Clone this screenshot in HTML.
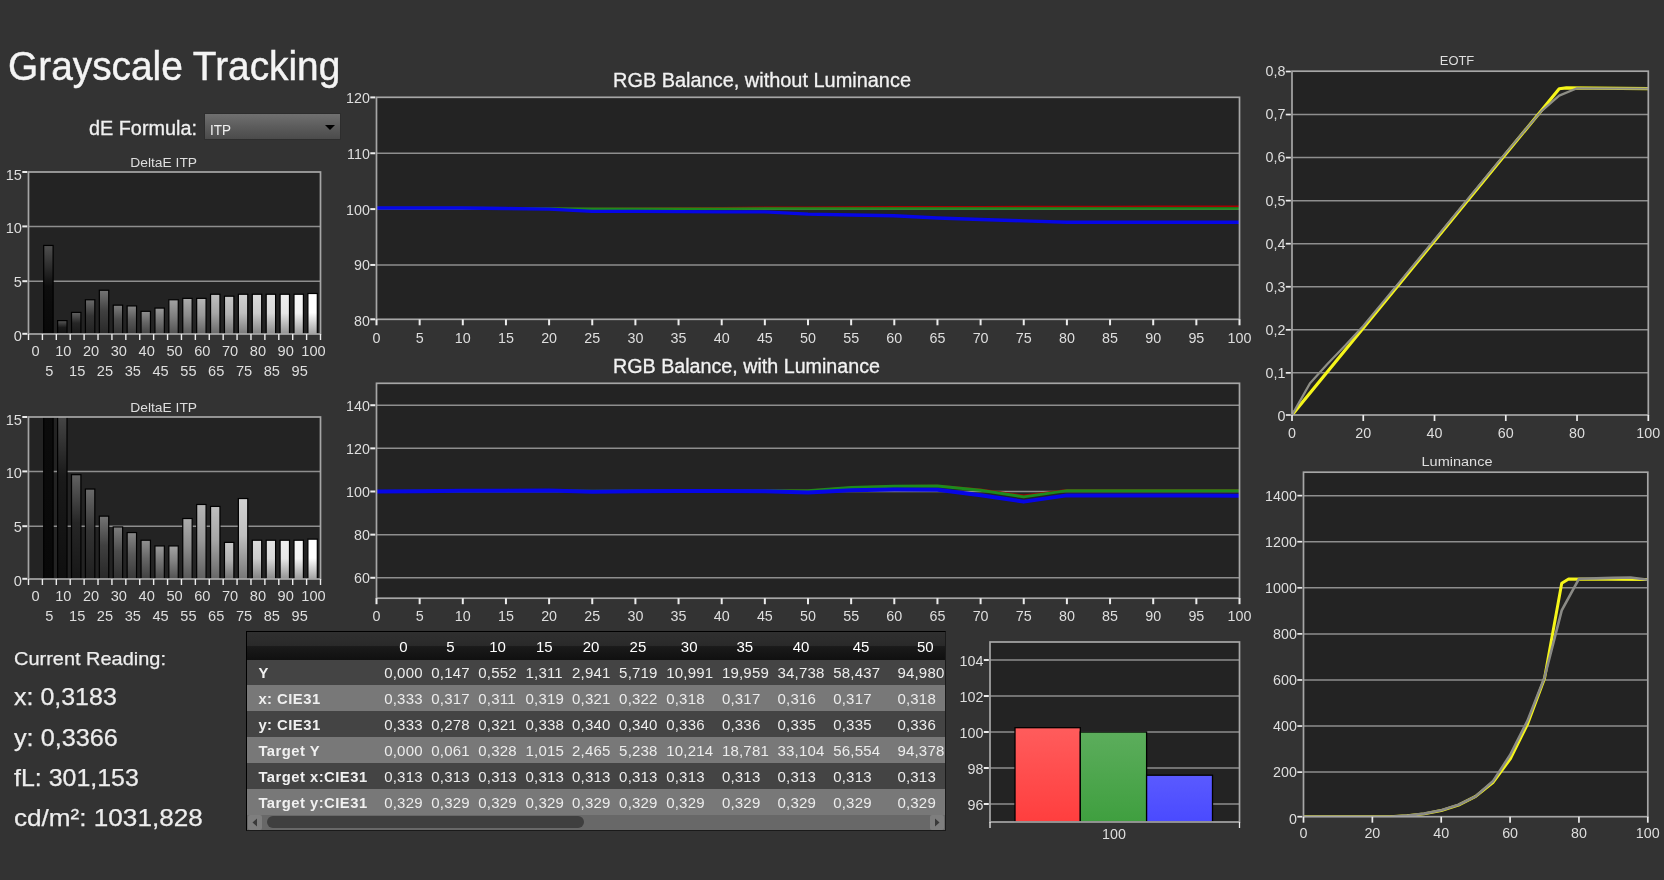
<!DOCTYPE html>
<html lang="en"><head><meta charset="utf-8"><title>Grayscale Tracking</title>
<style>
html,body{margin:0;padding:0}
body{width:1664px;height:880px;background:#333333;position:relative;overflow:hidden;font-family:"Liberation Sans",sans-serif;color:#f0f0f0}
.abs{position:absolute;white-space:nowrap;line-height:1;transform-origin:0 0}
h1.abs{margin:0;font-weight:400;left:7.5px;top:46px;font-size:41px;color:#f4f4f4;transform:scaleX(0.947);-webkit-text-stroke:0.45px #f4f4f4}
.lbl{left:89.2px;top:119.2px;font-size:19.6px;color:#f0f0f0;transform:scaleX(1.012);-webkit-text-stroke:0.3px #f0f0f0}
.dd{position:absolute;left:205px;top:113.9px;width:134.8px;height:25.6px;background:linear-gradient(#707070,#5c5c5c 50%,#4b4b4b);box-shadow:0 0 0 0.8px #2c2c2c}
.dd span{position:absolute;left:5.4px;top:8.3px;font-size:15.5px;line-height:1;color:#f2f2f2;transform:scaleX(0.87);transform-origin:0 0}
.dd i{position:absolute;left:119.8px;top:11.2px;width:0;height:0;border-left:5.2px solid transparent;border-right:5.2px solid transparent;border-top:5.2px solid #000}
.rd{left:14px;color:#ededed;-webkit-text-stroke:0.25px #ededed}
.tbl{position:absolute;left:245.6px;top:631px;width:698.3px;height:198.3px;border:1.5px solid #000;border-right:1px solid #1a1a1a;border-bottom:1px solid #1a1a1a;background:#444;overflow:hidden}
.hdr{position:absolute;left:0;top:0;width:100%;height:27.6px;background:linear-gradient(#2f2f2f 0,#2a2a2a 48%,#1a1a1a 52%,#101010 100%)}
.hc{position:absolute;top:7.4px;width:40px;text-align:center;font-size:15px;line-height:1;color:#fff;}
.row{position:absolute;left:0;width:100%;height:25.9px}
.r0{background:#444}.r1{background:#787878}
.rl{position:absolute;left:11.8px;top:6.9px;font-size:14.8px;letter-spacing:0.48px;font-weight:700;line-height:1;color:#f0f0f0}
.c{position:absolute;top:5.8px;font-size:15px;letter-spacing:0.2px;line-height:1;color:#ececec;white-space:nowrap}
.sb{position:absolute;left:0;top:182.8px;width:100%;height:15.5px;background:#686868}
.sbl,.sbr{position:absolute;top:0;width:14px;height:15px;background:#7e7e7e;border-radius:2px}
.sbl{left:1px}.sbr{right:1px}
.thumb{position:absolute;left:20px;top:1.5px;width:317px;height:12px;border-radius:6px;background:#3f3f3f}
#soft{position:absolute;left:0;top:0;width:1664px;height:880px;filter:blur(0.45px)}
</style></head><body><div id="soft">
<svg width="1664" height="880" viewBox="0 0 1664 880" style="position:absolute;left:0;top:0" font-family="'Liberation Sans', sans-serif">
<defs>
<linearGradient id="g0" x1="0" y1="0" x2="0" y2="1"><stop offset="0" stop-color="rgb(70,70,70)"/><stop offset="0.45" stop-color="rgb(0,0,0)"/><stop offset="1" stop-color="rgb(0,0,0)"/></linearGradient>
<linearGradient id="g1" x1="0" y1="0" x2="0" y2="1"><stop offset="0" stop-color="rgb(79,79,79)"/><stop offset="0.45" stop-color="rgb(13,13,13)"/><stop offset="1" stop-color="rgb(8,8,8)"/></linearGradient>
<linearGradient id="g2" x1="0" y1="0" x2="0" y2="1"><stop offset="0" stop-color="rgb(89,89,89)"/><stop offset="0.45" stop-color="rgb(26,26,26)"/><stop offset="1" stop-color="rgb(15,15,15)"/></linearGradient>
<linearGradient id="g3" x1="0" y1="0" x2="0" y2="1"><stop offset="0" stop-color="rgb(98,98,98)"/><stop offset="0.45" stop-color="rgb(38,38,38)"/><stop offset="1" stop-color="rgb(23,23,23)"/></linearGradient>
<linearGradient id="g4" x1="0" y1="0" x2="0" y2="1"><stop offset="0" stop-color="rgb(107,107,107)"/><stop offset="0.45" stop-color="rgb(51,51,51)"/><stop offset="1" stop-color="rgb(31,31,31)"/></linearGradient>
<linearGradient id="g5" x1="0" y1="0" x2="0" y2="1"><stop offset="0" stop-color="rgb(117,117,117)"/><stop offset="0.45" stop-color="rgb(64,64,64)"/><stop offset="1" stop-color="rgb(38,38,38)"/></linearGradient>
<linearGradient id="g6" x1="0" y1="0" x2="0" y2="1"><stop offset="0" stop-color="rgb(126,126,126)"/><stop offset="0.45" stop-color="rgb(76,76,76)"/><stop offset="1" stop-color="rgb(46,46,46)"/></linearGradient>
<linearGradient id="g7" x1="0" y1="0" x2="0" y2="1"><stop offset="0" stop-color="rgb(135,135,135)"/><stop offset="0.45" stop-color="rgb(89,89,89)"/><stop offset="1" stop-color="rgb(54,54,54)"/></linearGradient>
<linearGradient id="g8" x1="0" y1="0" x2="0" y2="1"><stop offset="0" stop-color="rgb(144,144,144)"/><stop offset="0.45" stop-color="rgb(102,102,102)"/><stop offset="1" stop-color="rgb(61,61,61)"/></linearGradient>
<linearGradient id="g9" x1="0" y1="0" x2="0" y2="1"><stop offset="0" stop-color="rgb(154,154,154)"/><stop offset="0.45" stop-color="rgb(115,115,115)"/><stop offset="1" stop-color="rgb(69,69,69)"/></linearGradient>
<linearGradient id="g10" x1="0" y1="0" x2="0" y2="1"><stop offset="0" stop-color="rgb(163,163,163)"/><stop offset="0.45" stop-color="rgb(128,128,128)"/><stop offset="1" stop-color="rgb(76,76,76)"/></linearGradient>
<linearGradient id="g11" x1="0" y1="0" x2="0" y2="1"><stop offset="0" stop-color="rgb(172,172,172)"/><stop offset="0.45" stop-color="rgb(140,140,140)"/><stop offset="1" stop-color="rgb(84,84,84)"/></linearGradient>
<linearGradient id="g12" x1="0" y1="0" x2="0" y2="1"><stop offset="0" stop-color="rgb(182,182,182)"/><stop offset="0.45" stop-color="rgb(153,153,153)"/><stop offset="1" stop-color="rgb(92,92,92)"/></linearGradient>
<linearGradient id="g13" x1="0" y1="0" x2="0" y2="1"><stop offset="0" stop-color="rgb(191,191,191)"/><stop offset="0.45" stop-color="rgb(166,166,166)"/><stop offset="1" stop-color="rgb(99,99,99)"/></linearGradient>
<linearGradient id="g14" x1="0" y1="0" x2="0" y2="1"><stop offset="0" stop-color="rgb(200,200,200)"/><stop offset="0.45" stop-color="rgb(178,178,178)"/><stop offset="1" stop-color="rgb(107,107,107)"/></linearGradient>
<linearGradient id="g15" x1="0" y1="0" x2="0" y2="1"><stop offset="0" stop-color="rgb(210,210,210)"/><stop offset="0.45" stop-color="rgb(191,191,191)"/><stop offset="1" stop-color="rgb(115,115,115)"/></linearGradient>
<linearGradient id="g16" x1="0" y1="0" x2="0" y2="1"><stop offset="0" stop-color="rgb(219,219,219)"/><stop offset="0.45" stop-color="rgb(204,204,204)"/><stop offset="1" stop-color="rgb(122,122,122)"/></linearGradient>
<linearGradient id="g17" x1="0" y1="0" x2="0" y2="1"><stop offset="0" stop-color="rgb(228,228,228)"/><stop offset="0.45" stop-color="rgb(217,217,217)"/><stop offset="1" stop-color="rgb(130,130,130)"/></linearGradient>
<linearGradient id="g18" x1="0" y1="0" x2="0" y2="1"><stop offset="0" stop-color="rgb(238,238,238)"/><stop offset="0.45" stop-color="rgb(230,230,230)"/><stop offset="1" stop-color="rgb(138,138,138)"/></linearGradient>
<linearGradient id="g19" x1="0" y1="0" x2="0" y2="1"><stop offset="0" stop-color="rgb(247,247,247)"/><stop offset="0.45" stop-color="rgb(242,242,242)"/><stop offset="1" stop-color="rgb(145,145,145)"/></linearGradient>
<linearGradient id="g20" x1="0" y1="0" x2="0" y2="1"><stop offset="0" stop-color="rgb(255,255,255)"/><stop offset="0.45" stop-color="rgb(255,255,255)"/><stop offset="1" stop-color="rgb(153,153,153)"/></linearGradient>
<linearGradient id="gr" x1="0" y1="0" x2="0" y2="1"><stop offset="0" stop-color="#ff5c5c"/><stop offset="1" stop-color="#ff3e3e"/></linearGradient>
<linearGradient id="gg" x1="0" y1="0" x2="0" y2="1"><stop offset="0" stop-color="#5cad5c"/><stop offset="1" stop-color="#3f9f3f"/></linearGradient>
<linearGradient id="gb" x1="0" y1="0" x2="0" y2="1"><stop offset="0" stop-color="#5a5aff"/><stop offset="1" stop-color="#4a4aff"/></linearGradient>
</defs>
<rect x="28.5" y="172" width="292" height="162" fill="#232323"/>
<line x1="28.5" y1="281.2" x2="320.5" y2="281.2" stroke="#8e8e8e" stroke-width="1.5"/>
<line x1="28.5" y1="226.4" x2="320.5" y2="226.4" stroke="#8e8e8e" stroke-width="1.5"/>
<clipPath id="cb172"><rect x="28.5" y="172" width="292" height="162"/></clipPath>
<g clip-path="url(#cb172)">
<rect x="43.7" y="245.44" width="9.4" height="90.56" fill="url(#g1)" stroke="#000" stroke-width="1.2"/>
<rect x="57.61" y="320.61" width="9.4" height="15.39" fill="url(#g2)" stroke="#000" stroke-width="1.2"/>
<rect x="71.51" y="312.4" width="9.4" height="23.6" fill="url(#g3)" stroke="#000" stroke-width="1.2"/>
<rect x="85.42" y="299.76" width="9.4" height="36.24" fill="url(#g4)" stroke="#000" stroke-width="1.2"/>
<rect x="99.32" y="290.26" width="9.4" height="45.74" fill="url(#g5)" stroke="#000" stroke-width="1.2"/>
<rect x="113.23" y="305.16" width="9.4" height="30.84" fill="url(#g6)" stroke="#000" stroke-width="1.2"/>
<rect x="127.13" y="305.92" width="9.4" height="30.08" fill="url(#g7)" stroke="#000" stroke-width="1.2"/>
<rect x="141.04" y="311.32" width="9.4" height="24.68" fill="url(#g8)" stroke="#000" stroke-width="1.2"/>
<rect x="154.94" y="308.08" width="9.4" height="27.92" fill="url(#g9)" stroke="#000" stroke-width="1.2"/>
<rect x="168.85" y="299.76" width="9.4" height="36.24" fill="url(#g10)" stroke="#000" stroke-width="1.2"/>
<rect x="182.75" y="298.36" width="9.4" height="37.64" fill="url(#g11)" stroke="#000" stroke-width="1.2"/>
<rect x="196.66" y="298.36" width="9.4" height="37.64" fill="url(#g12)" stroke="#000" stroke-width="1.2"/>
<rect x="210.56" y="294.26" width="9.4" height="41.74" fill="url(#g13)" stroke="#000" stroke-width="1.2"/>
<rect x="224.47" y="296.2" width="9.4" height="39.8" fill="url(#g14)" stroke="#000" stroke-width="1.2"/>
<rect x="238.37" y="294.26" width="9.4" height="41.74" fill="url(#g15)" stroke="#000" stroke-width="1.2"/>
<rect x="252.28" y="294.26" width="9.4" height="41.74" fill="url(#g16)" stroke="#000" stroke-width="1.2"/>
<rect x="266.18" y="294.26" width="9.4" height="41.74" fill="url(#g17)" stroke="#000" stroke-width="1.2"/>
<rect x="280.09" y="294.26" width="9.4" height="41.74" fill="url(#g18)" stroke="#000" stroke-width="1.2"/>
<rect x="293.99" y="294.26" width="9.4" height="41.74" fill="url(#g19)" stroke="#000" stroke-width="1.2"/>
<rect x="307.9" y="293.5" width="9.4" height="42.5" fill="url(#g20)" stroke="#000" stroke-width="1.2"/>
</g>
<rect x="28.5" y="172" width="292" height="162" fill="none" stroke="#a6a6a6" stroke-width="1.7"/>
<line x1="22.3" y1="333.8" x2="27.3" y2="333.8" stroke="#ececec" stroke-width="2"/>
<text x="21.9" y="341.46" text-anchor="end" font-size="14.6" fill="#dedede">0</text>
<line x1="22.3" y1="281.2" x2="27.3" y2="281.2" stroke="#ececec" stroke-width="2"/>
<text x="21.9" y="286.96" text-anchor="end" font-size="14.6" fill="#dedede">5</text>
<line x1="22.3" y1="226.4" x2="27.3" y2="226.4" stroke="#ececec" stroke-width="2"/>
<text x="21.9" y="232.86" text-anchor="end" font-size="14.6" fill="#dedede">10</text>
<line x1="22.3" y1="172" x2="27.3" y2="172" stroke="#ececec" stroke-width="2"/>
<text x="21.9" y="179.56" text-anchor="end" font-size="14.6" fill="#dedede">15</text>
<line x1="28.5" y1="334" x2="28.5" y2="340" stroke="#ececec" stroke-width="1.4"/>
<line x1="42.4" y1="334" x2="42.4" y2="340" stroke="#ececec" stroke-width="1.4"/>
<line x1="56.31" y1="334" x2="56.31" y2="340" stroke="#ececec" stroke-width="1.4"/>
<line x1="70.21" y1="334" x2="70.21" y2="340" stroke="#ececec" stroke-width="1.4"/>
<line x1="84.12" y1="334" x2="84.12" y2="340" stroke="#ececec" stroke-width="1.4"/>
<line x1="98.02" y1="334" x2="98.02" y2="340" stroke="#ececec" stroke-width="1.4"/>
<line x1="111.93" y1="334" x2="111.93" y2="340" stroke="#ececec" stroke-width="1.4"/>
<line x1="125.83" y1="334" x2="125.83" y2="340" stroke="#ececec" stroke-width="1.4"/>
<line x1="139.74" y1="334" x2="139.74" y2="340" stroke="#ececec" stroke-width="1.4"/>
<line x1="153.64" y1="334" x2="153.64" y2="340" stroke="#ececec" stroke-width="1.4"/>
<line x1="167.55" y1="334" x2="167.55" y2="340" stroke="#ececec" stroke-width="1.4"/>
<line x1="181.45" y1="334" x2="181.45" y2="340" stroke="#ececec" stroke-width="1.4"/>
<line x1="195.36" y1="334" x2="195.36" y2="340" stroke="#ececec" stroke-width="1.4"/>
<line x1="209.26" y1="334" x2="209.26" y2="340" stroke="#ececec" stroke-width="1.4"/>
<line x1="223.17" y1="334" x2="223.17" y2="340" stroke="#ececec" stroke-width="1.4"/>
<line x1="237.07" y1="334" x2="237.07" y2="340" stroke="#ececec" stroke-width="1.4"/>
<line x1="250.98" y1="334" x2="250.98" y2="340" stroke="#ececec" stroke-width="1.4"/>
<line x1="264.88" y1="334" x2="264.88" y2="340" stroke="#ececec" stroke-width="1.4"/>
<line x1="278.79" y1="334" x2="278.79" y2="340" stroke="#ececec" stroke-width="1.4"/>
<line x1="292.69" y1="334" x2="292.69" y2="340" stroke="#ececec" stroke-width="1.4"/>
<line x1="306.6" y1="334" x2="306.6" y2="340" stroke="#ececec" stroke-width="1.4"/>
<line x1="320.5" y1="334" x2="320.5" y2="340" stroke="#ececec" stroke-width="1.4"/>
<text x="35.45" y="355.5" text-anchor="middle" font-size="14.6" fill="#dedede">0</text>
<text x="49.36" y="375.5" text-anchor="middle" font-size="14.6" fill="#dedede">5</text>
<text x="63.26" y="355.5" text-anchor="middle" font-size="14.6" fill="#dedede">10</text>
<text x="77.17" y="375.5" text-anchor="middle" font-size="14.6" fill="#dedede">15</text>
<text x="91.07" y="355.5" text-anchor="middle" font-size="14.6" fill="#dedede">20</text>
<text x="104.98" y="375.5" text-anchor="middle" font-size="14.6" fill="#dedede">25</text>
<text x="118.88" y="355.5" text-anchor="middle" font-size="14.6" fill="#dedede">30</text>
<text x="132.79" y="375.5" text-anchor="middle" font-size="14.6" fill="#dedede">35</text>
<text x="146.69" y="355.5" text-anchor="middle" font-size="14.6" fill="#dedede">40</text>
<text x="160.6" y="375.5" text-anchor="middle" font-size="14.6" fill="#dedede">45</text>
<text x="174.5" y="355.5" text-anchor="middle" font-size="14.6" fill="#dedede">50</text>
<text x="188.4" y="375.5" text-anchor="middle" font-size="14.6" fill="#dedede">55</text>
<text x="202.31" y="355.5" text-anchor="middle" font-size="14.6" fill="#dedede">60</text>
<text x="216.21" y="375.5" text-anchor="middle" font-size="14.6" fill="#dedede">65</text>
<text x="230.12" y="355.5" text-anchor="middle" font-size="14.6" fill="#dedede">70</text>
<text x="244.02" y="375.5" text-anchor="middle" font-size="14.6" fill="#dedede">75</text>
<text x="257.93" y="355.5" text-anchor="middle" font-size="14.6" fill="#dedede">80</text>
<text x="271.83" y="375.5" text-anchor="middle" font-size="14.6" fill="#dedede">85</text>
<text x="285.74" y="355.5" text-anchor="middle" font-size="14.6" fill="#dedede">90</text>
<text x="299.64" y="375.5" text-anchor="middle" font-size="14.6" fill="#dedede">95</text>
<text x="313.55" y="355.5" text-anchor="middle" font-size="14.6" fill="#dedede">100</text>
<text x="163.7" y="166.8" text-anchor="middle" font-size="13.6" fill="#dedede" textLength="66.8" lengthAdjust="spacingAndGlyphs">DeltaE ITP</text>
<rect x="28.5" y="417" width="292" height="162" fill="#232323"/>
<line x1="28.5" y1="526.2" x2="320.5" y2="526.2" stroke="#8e8e8e" stroke-width="1.5"/>
<line x1="28.5" y1="471.4" x2="320.5" y2="471.4" stroke="#8e8e8e" stroke-width="1.5"/>
<clipPath id="cb417"><rect x="28.5" y="417" width="292" height="162"/></clipPath>
<g clip-path="url(#cb417)">
<rect x="43.7" y="147" width="9.4" height="434" fill="url(#g1)" stroke="#000" stroke-width="1.2"/>
<rect x="57.61" y="390" width="9.4" height="191" fill="url(#g2)" stroke="#000" stroke-width="1.2"/>
<rect x="71.51" y="474.67" width="9.4" height="106.33" fill="url(#g3)" stroke="#000" stroke-width="1.2"/>
<rect x="85.42" y="489.04" width="9.4" height="91.96" fill="url(#g4)" stroke="#000" stroke-width="1.2"/>
<rect x="99.32" y="516.14" width="9.4" height="64.86" fill="url(#g5)" stroke="#000" stroke-width="1.2"/>
<rect x="113.23" y="526.94" width="9.4" height="54.06" fill="url(#g6)" stroke="#000" stroke-width="1.2"/>
<rect x="127.13" y="532.56" width="9.4" height="48.44" fill="url(#g7)" stroke="#000" stroke-width="1.2"/>
<rect x="141.04" y="540.23" width="9.4" height="40.77" fill="url(#g8)" stroke="#000" stroke-width="1.2"/>
<rect x="154.94" y="545.95" width="9.4" height="35.05" fill="url(#g9)" stroke="#000" stroke-width="1.2"/>
<rect x="168.85" y="545.95" width="9.4" height="35.05" fill="url(#g10)" stroke="#000" stroke-width="1.2"/>
<rect x="182.75" y="518.52" width="9.4" height="62.48" fill="url(#g11)" stroke="#000" stroke-width="1.2"/>
<rect x="196.66" y="504.48" width="9.4" height="76.52" fill="url(#g12)" stroke="#000" stroke-width="1.2"/>
<rect x="210.56" y="506.42" width="9.4" height="74.58" fill="url(#g13)" stroke="#000" stroke-width="1.2"/>
<rect x="224.47" y="542.39" width="9.4" height="38.61" fill="url(#g14)" stroke="#000" stroke-width="1.2"/>
<rect x="238.37" y="498.54" width="9.4" height="82.46" fill="url(#g15)" stroke="#000" stroke-width="1.2"/>
<rect x="252.28" y="540.23" width="9.4" height="40.77" fill="url(#g16)" stroke="#000" stroke-width="1.2"/>
<rect x="266.18" y="540.23" width="9.4" height="40.77" fill="url(#g17)" stroke="#000" stroke-width="1.2"/>
<rect x="280.09" y="540.23" width="9.4" height="40.77" fill="url(#g18)" stroke="#000" stroke-width="1.2"/>
<rect x="293.99" y="540.23" width="9.4" height="40.77" fill="url(#g19)" stroke="#000" stroke-width="1.2"/>
<rect x="307.9" y="539.15" width="9.4" height="41.85" fill="url(#g20)" stroke="#000" stroke-width="1.2"/>
</g>
<rect x="28.5" y="417" width="292" height="162" fill="none" stroke="#a6a6a6" stroke-width="1.7"/>
<line x1="22.3" y1="578.8" x2="27.3" y2="578.8" stroke="#ececec" stroke-width="2"/>
<text x="21.9" y="586.46" text-anchor="end" font-size="14.6" fill="#dedede">0</text>
<line x1="22.3" y1="526.2" x2="27.3" y2="526.2" stroke="#ececec" stroke-width="2"/>
<text x="21.9" y="531.96" text-anchor="end" font-size="14.6" fill="#dedede">5</text>
<line x1="22.3" y1="471.4" x2="27.3" y2="471.4" stroke="#ececec" stroke-width="2"/>
<text x="21.9" y="477.86" text-anchor="end" font-size="14.6" fill="#dedede">10</text>
<line x1="22.3" y1="417" x2="27.3" y2="417" stroke="#ececec" stroke-width="2"/>
<text x="21.9" y="424.56" text-anchor="end" font-size="14.6" fill="#dedede">15</text>
<line x1="28.5" y1="579" x2="28.5" y2="585" stroke="#ececec" stroke-width="1.4"/>
<line x1="42.4" y1="579" x2="42.4" y2="585" stroke="#ececec" stroke-width="1.4"/>
<line x1="56.31" y1="579" x2="56.31" y2="585" stroke="#ececec" stroke-width="1.4"/>
<line x1="70.21" y1="579" x2="70.21" y2="585" stroke="#ececec" stroke-width="1.4"/>
<line x1="84.12" y1="579" x2="84.12" y2="585" stroke="#ececec" stroke-width="1.4"/>
<line x1="98.02" y1="579" x2="98.02" y2="585" stroke="#ececec" stroke-width="1.4"/>
<line x1="111.93" y1="579" x2="111.93" y2="585" stroke="#ececec" stroke-width="1.4"/>
<line x1="125.83" y1="579" x2="125.83" y2="585" stroke="#ececec" stroke-width="1.4"/>
<line x1="139.74" y1="579" x2="139.74" y2="585" stroke="#ececec" stroke-width="1.4"/>
<line x1="153.64" y1="579" x2="153.64" y2="585" stroke="#ececec" stroke-width="1.4"/>
<line x1="167.55" y1="579" x2="167.55" y2="585" stroke="#ececec" stroke-width="1.4"/>
<line x1="181.45" y1="579" x2="181.45" y2="585" stroke="#ececec" stroke-width="1.4"/>
<line x1="195.36" y1="579" x2="195.36" y2="585" stroke="#ececec" stroke-width="1.4"/>
<line x1="209.26" y1="579" x2="209.26" y2="585" stroke="#ececec" stroke-width="1.4"/>
<line x1="223.17" y1="579" x2="223.17" y2="585" stroke="#ececec" stroke-width="1.4"/>
<line x1="237.07" y1="579" x2="237.07" y2="585" stroke="#ececec" stroke-width="1.4"/>
<line x1="250.98" y1="579" x2="250.98" y2="585" stroke="#ececec" stroke-width="1.4"/>
<line x1="264.88" y1="579" x2="264.88" y2="585" stroke="#ececec" stroke-width="1.4"/>
<line x1="278.79" y1="579" x2="278.79" y2="585" stroke="#ececec" stroke-width="1.4"/>
<line x1="292.69" y1="579" x2="292.69" y2="585" stroke="#ececec" stroke-width="1.4"/>
<line x1="306.6" y1="579" x2="306.6" y2="585" stroke="#ececec" stroke-width="1.4"/>
<line x1="320.5" y1="579" x2="320.5" y2="585" stroke="#ececec" stroke-width="1.4"/>
<text x="35.45" y="600.5" text-anchor="middle" font-size="14.6" fill="#dedede">0</text>
<text x="49.36" y="620.5" text-anchor="middle" font-size="14.6" fill="#dedede">5</text>
<text x="63.26" y="600.5" text-anchor="middle" font-size="14.6" fill="#dedede">10</text>
<text x="77.17" y="620.5" text-anchor="middle" font-size="14.6" fill="#dedede">15</text>
<text x="91.07" y="600.5" text-anchor="middle" font-size="14.6" fill="#dedede">20</text>
<text x="104.98" y="620.5" text-anchor="middle" font-size="14.6" fill="#dedede">25</text>
<text x="118.88" y="600.5" text-anchor="middle" font-size="14.6" fill="#dedede">30</text>
<text x="132.79" y="620.5" text-anchor="middle" font-size="14.6" fill="#dedede">35</text>
<text x="146.69" y="600.5" text-anchor="middle" font-size="14.6" fill="#dedede">40</text>
<text x="160.6" y="620.5" text-anchor="middle" font-size="14.6" fill="#dedede">45</text>
<text x="174.5" y="600.5" text-anchor="middle" font-size="14.6" fill="#dedede">50</text>
<text x="188.4" y="620.5" text-anchor="middle" font-size="14.6" fill="#dedede">55</text>
<text x="202.31" y="600.5" text-anchor="middle" font-size="14.6" fill="#dedede">60</text>
<text x="216.21" y="620.5" text-anchor="middle" font-size="14.6" fill="#dedede">65</text>
<text x="230.12" y="600.5" text-anchor="middle" font-size="14.6" fill="#dedede">70</text>
<text x="244.02" y="620.5" text-anchor="middle" font-size="14.6" fill="#dedede">75</text>
<text x="257.93" y="600.5" text-anchor="middle" font-size="14.6" fill="#dedede">80</text>
<text x="271.83" y="620.5" text-anchor="middle" font-size="14.6" fill="#dedede">85</text>
<text x="285.74" y="600.5" text-anchor="middle" font-size="14.6" fill="#dedede">90</text>
<text x="299.64" y="620.5" text-anchor="middle" font-size="14.6" fill="#dedede">95</text>
<text x="313.55" y="600.5" text-anchor="middle" font-size="14.6" fill="#dedede">100</text>
<text x="163.7" y="411.8" text-anchor="middle" font-size="13.6" fill="#dedede" textLength="66.8" lengthAdjust="spacingAndGlyphs">DeltaE ITP</text>
<rect x="376.5" y="97.3" width="863" height="222" fill="#232323"/>
<line x1="376.5" y1="264.95" x2="1239.5" y2="264.95" stroke="#8e8e8e" stroke-width="1.5"/>
<line x1="376.5" y1="209.1" x2="1239.5" y2="209.1" stroke="#8e8e8e" stroke-width="1.5"/>
<line x1="376.5" y1="153.25" x2="1239.5" y2="153.25" stroke="#8e8e8e" stroke-width="1.5"/>
<clipPath id="c97"><rect x="376.5" y="97.3" width="863" height="222"/></clipPath>
<g clip-path="url(#c97)">
<polyline points="376.5,207.98 419.65,207.98 462.8,207.98 505.95,208.26 549.1,208.54 592.25,208.54 635.4,208.26 678.55,207.98 721.7,207.7 764.85,207.42 808,207.42 851.15,207.15 894.3,206.87 937.45,206.87 980.6,206.87 1023.75,206.59 1066.9,206.59 1110.05,206.59 1153.2,206.31 1196.35,206.31 1239.5,206.31" fill="none" stroke="#a80000" stroke-width="1.6" stroke-linejoin="round"/>
<polyline points="376.5,207.98 419.65,207.98 462.8,207.98 505.95,208.26 549.1,208.54 592.25,208.82 635.4,208.82 678.55,208.82 721.7,208.82 764.85,208.54 808,208.54 851.15,208.54 894.3,208.54 937.45,208.54 980.6,208.54 1023.75,208.54 1066.9,208.54 1110.05,208.54 1153.2,208.54 1196.35,208.54 1239.5,208.54" fill="none" stroke="#1d8a1d" stroke-width="2.6" stroke-linejoin="round"/>
<polyline points="376.5,207.98 419.65,207.98 462.8,207.98 505.95,208.54 549.1,209.1 592.25,211.33 635.4,211.33 678.55,211.61 721.7,211.89 764.85,211.89 808,214.13 851.15,214.96 894.3,215.8 937.45,218.04 980.6,219.43 1023.75,220.83 1066.9,222.22 1110.05,222.22 1153.2,222.22 1196.35,222.22 1239.5,222.22" fill="none" stroke="#0606e6" stroke-width="3.4" stroke-linejoin="round"/>
</g>
<rect x="376.5" y="97.3" width="863" height="222" fill="none" stroke="#a6a6a6" stroke-width="1.7"/>
<line x1="370.3" y1="319.3" x2="375.3" y2="319.3" stroke="#ececec" stroke-width="2"/>
<text x="369.9" y="326.25" text-anchor="end" font-size="14.3" fill="#dedede">80</text>
<line x1="370.3" y1="264.95" x2="375.3" y2="264.95" stroke="#ececec" stroke-width="2"/>
<text x="369.9" y="270.4" text-anchor="end" font-size="14.3" fill="#dedede">90</text>
<line x1="370.3" y1="209.1" x2="375.3" y2="209.1" stroke="#ececec" stroke-width="2"/>
<text x="369.9" y="214.55" text-anchor="end" font-size="14.3" fill="#dedede">100</text>
<line x1="370.3" y1="153.25" x2="375.3" y2="153.25" stroke="#ececec" stroke-width="2"/>
<text x="369.9" y="158.7" text-anchor="end" font-size="14.3" fill="#dedede">110</text>
<line x1="370.3" y1="97.4" x2="375.3" y2="97.4" stroke="#ececec" stroke-width="2"/>
<text x="369.9" y="102.85" text-anchor="end" font-size="14.3" fill="#dedede">120</text>
<line x1="376.5" y1="319.3" x2="376.5" y2="325.3" stroke="#ececec" stroke-width="2"/>
<text x="376.5" y="342.5" text-anchor="middle" font-size="14.3" fill="#dedede">0</text>
<line x1="419.65" y1="319.3" x2="419.65" y2="325.3" stroke="#ececec" stroke-width="2"/>
<text x="419.65" y="342.5" text-anchor="middle" font-size="14.3" fill="#dedede">5</text>
<line x1="462.8" y1="319.3" x2="462.8" y2="325.3" stroke="#ececec" stroke-width="2"/>
<text x="462.8" y="342.5" text-anchor="middle" font-size="14.3" fill="#dedede">10</text>
<line x1="505.95" y1="319.3" x2="505.95" y2="325.3" stroke="#ececec" stroke-width="2"/>
<text x="505.95" y="342.5" text-anchor="middle" font-size="14.3" fill="#dedede">15</text>
<line x1="549.1" y1="319.3" x2="549.1" y2="325.3" stroke="#ececec" stroke-width="2"/>
<text x="549.1" y="342.5" text-anchor="middle" font-size="14.3" fill="#dedede">20</text>
<line x1="592.25" y1="319.3" x2="592.25" y2="325.3" stroke="#ececec" stroke-width="2"/>
<text x="592.25" y="342.5" text-anchor="middle" font-size="14.3" fill="#dedede">25</text>
<line x1="635.4" y1="319.3" x2="635.4" y2="325.3" stroke="#ececec" stroke-width="2"/>
<text x="635.4" y="342.5" text-anchor="middle" font-size="14.3" fill="#dedede">30</text>
<line x1="678.55" y1="319.3" x2="678.55" y2="325.3" stroke="#ececec" stroke-width="2"/>
<text x="678.55" y="342.5" text-anchor="middle" font-size="14.3" fill="#dedede">35</text>
<line x1="721.7" y1="319.3" x2="721.7" y2="325.3" stroke="#ececec" stroke-width="2"/>
<text x="721.7" y="342.5" text-anchor="middle" font-size="14.3" fill="#dedede">40</text>
<line x1="764.85" y1="319.3" x2="764.85" y2="325.3" stroke="#ececec" stroke-width="2"/>
<text x="764.85" y="342.5" text-anchor="middle" font-size="14.3" fill="#dedede">45</text>
<line x1="808" y1="319.3" x2="808" y2="325.3" stroke="#ececec" stroke-width="2"/>
<text x="808" y="342.5" text-anchor="middle" font-size="14.3" fill="#dedede">50</text>
<line x1="851.15" y1="319.3" x2="851.15" y2="325.3" stroke="#ececec" stroke-width="2"/>
<text x="851.15" y="342.5" text-anchor="middle" font-size="14.3" fill="#dedede">55</text>
<line x1="894.3" y1="319.3" x2="894.3" y2="325.3" stroke="#ececec" stroke-width="2"/>
<text x="894.3" y="342.5" text-anchor="middle" font-size="14.3" fill="#dedede">60</text>
<line x1="937.45" y1="319.3" x2="937.45" y2="325.3" stroke="#ececec" stroke-width="2"/>
<text x="937.45" y="342.5" text-anchor="middle" font-size="14.3" fill="#dedede">65</text>
<line x1="980.6" y1="319.3" x2="980.6" y2="325.3" stroke="#ececec" stroke-width="2"/>
<text x="980.6" y="342.5" text-anchor="middle" font-size="14.3" fill="#dedede">70</text>
<line x1="1023.75" y1="319.3" x2="1023.75" y2="325.3" stroke="#ececec" stroke-width="2"/>
<text x="1023.75" y="342.5" text-anchor="middle" font-size="14.3" fill="#dedede">75</text>
<line x1="1066.9" y1="319.3" x2="1066.9" y2="325.3" stroke="#ececec" stroke-width="2"/>
<text x="1066.9" y="342.5" text-anchor="middle" font-size="14.3" fill="#dedede">80</text>
<line x1="1110.05" y1="319.3" x2="1110.05" y2="325.3" stroke="#ececec" stroke-width="2"/>
<text x="1110.05" y="342.5" text-anchor="middle" font-size="14.3" fill="#dedede">85</text>
<line x1="1153.2" y1="319.3" x2="1153.2" y2="325.3" stroke="#ececec" stroke-width="2"/>
<text x="1153.2" y="342.5" text-anchor="middle" font-size="14.3" fill="#dedede">90</text>
<line x1="1196.35" y1="319.3" x2="1196.35" y2="325.3" stroke="#ececec" stroke-width="2"/>
<text x="1196.35" y="342.5" text-anchor="middle" font-size="14.3" fill="#dedede">95</text>
<line x1="1239.5" y1="319.3" x2="1239.5" y2="325.3" stroke="#ececec" stroke-width="2"/>
<text x="1239.5" y="342.5" text-anchor="middle" font-size="14.3" fill="#dedede">100</text>
<text x="613" y="86.5" font-size="19.6" fill="#f2f2f2" stroke="#f2f2f2" stroke-width="0.3" textLength="298" lengthAdjust="spacingAndGlyphs">RGB Balance, without Luminance</text>
<rect x="376.5" y="383.3" width="863" height="214.9" fill="#232323"/>
<line x1="376.5" y1="577.78" x2="1239.5" y2="577.78" stroke="#8e8e8e" stroke-width="1.5"/>
<line x1="376.5" y1="534.64" x2="1239.5" y2="534.64" stroke="#8e8e8e" stroke-width="1.5"/>
<line x1="376.5" y1="491.5" x2="1239.5" y2="491.5" stroke="#8e8e8e" stroke-width="1.5"/>
<line x1="376.5" y1="448.36" x2="1239.5" y2="448.36" stroke="#8e8e8e" stroke-width="1.5"/>
<line x1="376.5" y1="405.22" x2="1239.5" y2="405.22" stroke="#8e8e8e" stroke-width="1.5"/>
<clipPath id="c383"><rect x="376.5" y="383.3" width="863" height="214.9"/></clipPath>
<g clip-path="url(#c383)">
<polyline points="376.5,491.5 419.65,491.28 462.8,491.07 505.95,490.85 549.1,490.64 592.25,491.07 635.4,490.85 678.55,490.64 721.7,490.64 764.85,490.42 808,490.21 851.15,487.19 894.3,485.89 937.45,485.46 980.6,489.34 1023.75,495.38 1066.9,489.77 1110.05,489.77 1153.2,489.77 1196.35,489.77 1239.5,489.77" fill="none" stroke="#a80000" stroke-width="1.6" stroke-linejoin="round"/>
<polyline points="376.5,491.5 419.65,491.28 462.8,491.07 505.95,490.85 549.1,490.64 592.25,491.28 635.4,491.07 678.55,490.85 721.7,490.85 764.85,490.64 808,490.85 851.15,487.62 894.3,486.32 937.45,485.89 980.6,490.21 1023.75,496.89 1066.9,490.64 1110.05,490.64 1153.2,490.64 1196.35,490.64 1239.5,490.64" fill="none" stroke="#1d8a1d" stroke-width="3" stroke-linejoin="round"/>
<polyline points="376.5,491.5 419.65,491.28 462.8,490.85 505.95,490.64 549.1,490.42 592.25,491.72 635.4,491.28 678.55,491.07 721.7,491.07 764.85,491.28 808,492.58 851.15,490.21 894.3,489.56 937.45,489.77 980.6,495.17 1023.75,501.64 1066.9,495.38 1110.05,495.38 1153.2,495.6 1196.35,495.6 1239.5,495.81" fill="none" stroke="#0606e6" stroke-width="4" stroke-linejoin="round"/>
</g>
<rect x="376.5" y="383.3" width="863" height="214.9" fill="none" stroke="#a6a6a6" stroke-width="1.7"/>
<line x1="370.3" y1="577.78" x2="375.3" y2="577.78" stroke="#ececec" stroke-width="2"/>
<text x="369.9" y="583.23" text-anchor="end" font-size="14.3" fill="#dedede">60</text>
<line x1="370.3" y1="534.64" x2="375.3" y2="534.64" stroke="#ececec" stroke-width="2"/>
<text x="369.9" y="540.09" text-anchor="end" font-size="14.3" fill="#dedede">80</text>
<line x1="370.3" y1="491.5" x2="375.3" y2="491.5" stroke="#ececec" stroke-width="2"/>
<text x="369.9" y="496.95" text-anchor="end" font-size="14.3" fill="#dedede">100</text>
<line x1="370.3" y1="448.36" x2="375.3" y2="448.36" stroke="#ececec" stroke-width="2"/>
<text x="369.9" y="453.81" text-anchor="end" font-size="14.3" fill="#dedede">120</text>
<line x1="370.3" y1="405.22" x2="375.3" y2="405.22" stroke="#ececec" stroke-width="2"/>
<text x="369.9" y="410.67" text-anchor="end" font-size="14.3" fill="#dedede">140</text>
<line x1="376.5" y1="598.2" x2="376.5" y2="604.2" stroke="#ececec" stroke-width="2"/>
<text x="376.5" y="621.4" text-anchor="middle" font-size="14.3" fill="#dedede">0</text>
<line x1="419.65" y1="598.2" x2="419.65" y2="604.2" stroke="#ececec" stroke-width="2"/>
<text x="419.65" y="621.4" text-anchor="middle" font-size="14.3" fill="#dedede">5</text>
<line x1="462.8" y1="598.2" x2="462.8" y2="604.2" stroke="#ececec" stroke-width="2"/>
<text x="462.8" y="621.4" text-anchor="middle" font-size="14.3" fill="#dedede">10</text>
<line x1="505.95" y1="598.2" x2="505.95" y2="604.2" stroke="#ececec" stroke-width="2"/>
<text x="505.95" y="621.4" text-anchor="middle" font-size="14.3" fill="#dedede">15</text>
<line x1="549.1" y1="598.2" x2="549.1" y2="604.2" stroke="#ececec" stroke-width="2"/>
<text x="549.1" y="621.4" text-anchor="middle" font-size="14.3" fill="#dedede">20</text>
<line x1="592.25" y1="598.2" x2="592.25" y2="604.2" stroke="#ececec" stroke-width="2"/>
<text x="592.25" y="621.4" text-anchor="middle" font-size="14.3" fill="#dedede">25</text>
<line x1="635.4" y1="598.2" x2="635.4" y2="604.2" stroke="#ececec" stroke-width="2"/>
<text x="635.4" y="621.4" text-anchor="middle" font-size="14.3" fill="#dedede">30</text>
<line x1="678.55" y1="598.2" x2="678.55" y2="604.2" stroke="#ececec" stroke-width="2"/>
<text x="678.55" y="621.4" text-anchor="middle" font-size="14.3" fill="#dedede">35</text>
<line x1="721.7" y1="598.2" x2="721.7" y2="604.2" stroke="#ececec" stroke-width="2"/>
<text x="721.7" y="621.4" text-anchor="middle" font-size="14.3" fill="#dedede">40</text>
<line x1="764.85" y1="598.2" x2="764.85" y2="604.2" stroke="#ececec" stroke-width="2"/>
<text x="764.85" y="621.4" text-anchor="middle" font-size="14.3" fill="#dedede">45</text>
<line x1="808" y1="598.2" x2="808" y2="604.2" stroke="#ececec" stroke-width="2"/>
<text x="808" y="621.4" text-anchor="middle" font-size="14.3" fill="#dedede">50</text>
<line x1="851.15" y1="598.2" x2="851.15" y2="604.2" stroke="#ececec" stroke-width="2"/>
<text x="851.15" y="621.4" text-anchor="middle" font-size="14.3" fill="#dedede">55</text>
<line x1="894.3" y1="598.2" x2="894.3" y2="604.2" stroke="#ececec" stroke-width="2"/>
<text x="894.3" y="621.4" text-anchor="middle" font-size="14.3" fill="#dedede">60</text>
<line x1="937.45" y1="598.2" x2="937.45" y2="604.2" stroke="#ececec" stroke-width="2"/>
<text x="937.45" y="621.4" text-anchor="middle" font-size="14.3" fill="#dedede">65</text>
<line x1="980.6" y1="598.2" x2="980.6" y2="604.2" stroke="#ececec" stroke-width="2"/>
<text x="980.6" y="621.4" text-anchor="middle" font-size="14.3" fill="#dedede">70</text>
<line x1="1023.75" y1="598.2" x2="1023.75" y2="604.2" stroke="#ececec" stroke-width="2"/>
<text x="1023.75" y="621.4" text-anchor="middle" font-size="14.3" fill="#dedede">75</text>
<line x1="1066.9" y1="598.2" x2="1066.9" y2="604.2" stroke="#ececec" stroke-width="2"/>
<text x="1066.9" y="621.4" text-anchor="middle" font-size="14.3" fill="#dedede">80</text>
<line x1="1110.05" y1="598.2" x2="1110.05" y2="604.2" stroke="#ececec" stroke-width="2"/>
<text x="1110.05" y="621.4" text-anchor="middle" font-size="14.3" fill="#dedede">85</text>
<line x1="1153.2" y1="598.2" x2="1153.2" y2="604.2" stroke="#ececec" stroke-width="2"/>
<text x="1153.2" y="621.4" text-anchor="middle" font-size="14.3" fill="#dedede">90</text>
<line x1="1196.35" y1="598.2" x2="1196.35" y2="604.2" stroke="#ececec" stroke-width="2"/>
<text x="1196.35" y="621.4" text-anchor="middle" font-size="14.3" fill="#dedede">95</text>
<line x1="1239.5" y1="598.2" x2="1239.5" y2="604.2" stroke="#ececec" stroke-width="2"/>
<text x="1239.5" y="621.4" text-anchor="middle" font-size="14.3" fill="#dedede">100</text>
<text x="613" y="372.5" font-size="19.6" fill="#f2f2f2" stroke="#f2f2f2" stroke-width="0.3" textLength="267" lengthAdjust="spacingAndGlyphs">RGB Balance, with Luminance</text>
<rect x="1292" y="71.2" width="356.3" height="343.8" fill="#232323"/>
<line x1="1292" y1="372.85" x2="1648.3" y2="372.85" stroke="#8e8e8e" stroke-width="1.5"/>
<line x1="1292" y1="329.8" x2="1648.3" y2="329.8" stroke="#8e8e8e" stroke-width="1.5"/>
<line x1="1292" y1="286.75" x2="1648.3" y2="286.75" stroke="#8e8e8e" stroke-width="1.5"/>
<line x1="1292" y1="243.7" x2="1648.3" y2="243.7" stroke="#8e8e8e" stroke-width="1.5"/>
<line x1="1292" y1="200.65" x2="1648.3" y2="200.65" stroke="#8e8e8e" stroke-width="1.5"/>
<line x1="1292" y1="157.6" x2="1648.3" y2="157.6" stroke="#8e8e8e" stroke-width="1.5"/>
<line x1="1292" y1="114.55" x2="1648.3" y2="114.55" stroke="#8e8e8e" stroke-width="1.5"/>
<clipPath id="ce"><rect x="1292" y="71.2" width="356.3" height="343.8"/></clipPath>
<g clip-path="url(#ce)">
<polyline points="1292,415 1559.22,88.72 1566.35,87.86 1648.3,88.72" fill="none" stroke="#f5f51a" stroke-width="3.2" stroke-linejoin="round"/>
<polyline points="1292,415 1309.82,383.61 1327.63,363.81 1345.44,345.3 1363.26,325.93 1381.08,304.4 1398.89,282.88 1434.52,239.61 1470.15,196.13 1505.78,152.86 1523.6,131.77 1541.41,111.11 1559.22,95.61 1577.04,88.29 1648.3,88.72" fill="none" stroke="#8e8e86" stroke-width="2.2" stroke-linejoin="round"/>
</g>
<rect x="1292" y="71.2" width="356.3" height="343.8" fill="none" stroke="#a6a6a6" stroke-width="1.7"/>
<line x1="1285.8" y1="415" x2="1290.8" y2="415" stroke="#ececec" stroke-width="1.7"/>
<text x="1285.4" y="420.75" text-anchor="end" font-size="14.3" fill="#dedede">0</text>
<line x1="1285.8" y1="372.85" x2="1290.8" y2="372.85" stroke="#ececec" stroke-width="1.7"/>
<text x="1285.4" y="377.7" text-anchor="end" font-size="14.3" fill="#dedede">0,1</text>
<line x1="1285.8" y1="329.8" x2="1290.8" y2="329.8" stroke="#ececec" stroke-width="1.7"/>
<text x="1285.4" y="334.65" text-anchor="end" font-size="14.3" fill="#dedede">0,2</text>
<line x1="1285.8" y1="286.75" x2="1290.8" y2="286.75" stroke="#ececec" stroke-width="1.7"/>
<text x="1285.4" y="291.6" text-anchor="end" font-size="14.3" fill="#dedede">0,3</text>
<line x1="1285.8" y1="243.7" x2="1290.8" y2="243.7" stroke="#ececec" stroke-width="1.7"/>
<text x="1285.4" y="248.55" text-anchor="end" font-size="14.3" fill="#dedede">0,4</text>
<line x1="1285.8" y1="200.65" x2="1290.8" y2="200.65" stroke="#ececec" stroke-width="1.7"/>
<text x="1285.4" y="205.5" text-anchor="end" font-size="14.3" fill="#dedede">0,5</text>
<line x1="1285.8" y1="157.6" x2="1290.8" y2="157.6" stroke="#ececec" stroke-width="1.7"/>
<text x="1285.4" y="162.45" text-anchor="end" font-size="14.3" fill="#dedede">0,6</text>
<line x1="1285.8" y1="114.55" x2="1290.8" y2="114.55" stroke="#ececec" stroke-width="1.7"/>
<text x="1285.4" y="119.4" text-anchor="end" font-size="14.3" fill="#dedede">0,7</text>
<line x1="1285.8" y1="71.5" x2="1290.8" y2="71.5" stroke="#ececec" stroke-width="1.7"/>
<text x="1285.4" y="76.35" text-anchor="end" font-size="14.3" fill="#dedede">0,8</text>
<line x1="1292" y1="415" x2="1292" y2="421" stroke="#ececec" stroke-width="1.7"/>
<text x="1292" y="438.1" text-anchor="middle" font-size="14.3" fill="#dedede">0</text>
<line x1="1363.26" y1="415" x2="1363.26" y2="421" stroke="#ececec" stroke-width="1.7"/>
<text x="1363.26" y="438.1" text-anchor="middle" font-size="14.3" fill="#dedede">20</text>
<line x1="1434.52" y1="415" x2="1434.52" y2="421" stroke="#ececec" stroke-width="1.7"/>
<text x="1434.52" y="438.1" text-anchor="middle" font-size="14.3" fill="#dedede">40</text>
<line x1="1505.78" y1="415" x2="1505.78" y2="421" stroke="#ececec" stroke-width="1.7"/>
<text x="1505.78" y="438.1" text-anchor="middle" font-size="14.3" fill="#dedede">60</text>
<line x1="1577.04" y1="415" x2="1577.04" y2="421" stroke="#ececec" stroke-width="1.7"/>
<text x="1577.04" y="438.1" text-anchor="middle" font-size="14.3" fill="#dedede">80</text>
<line x1="1648.3" y1="415" x2="1648.3" y2="421" stroke="#ececec" stroke-width="1.7"/>
<text x="1648.3" y="438.1" text-anchor="middle" font-size="14.3" fill="#dedede">100</text>
<text x="1457" y="64.8" text-anchor="middle" font-size="13.6" fill="#dedede" textLength="34.5" lengthAdjust="spacingAndGlyphs">EOTF</text>
<rect x="1303.5" y="472.2" width="344.3" height="344.5" fill="#232323"/>
<line x1="1303.5" y1="772.12" x2="1647.8" y2="772.12" stroke="#8e8e8e" stroke-width="1.5"/>
<line x1="1303.5" y1="726.04" x2="1647.8" y2="726.04" stroke="#8e8e8e" stroke-width="1.5"/>
<line x1="1303.5" y1="679.96" x2="1647.8" y2="679.96" stroke="#8e8e8e" stroke-width="1.5"/>
<line x1="1303.5" y1="633.88" x2="1647.8" y2="633.88" stroke="#8e8e8e" stroke-width="1.5"/>
<line x1="1303.5" y1="587.8" x2="1647.8" y2="587.8" stroke="#8e8e8e" stroke-width="1.5"/>
<line x1="1303.5" y1="541.72" x2="1647.8" y2="541.72" stroke="#8e8e8e" stroke-width="1.5"/>
<line x1="1303.5" y1="495.64" x2="1647.8" y2="495.64" stroke="#8e8e8e" stroke-width="1.5"/>
<clipPath id="cl"><rect x="1303.5" y="472.2" width="344.3" height="344.5"/></clipPath>
<g clip-path="url(#cl)">
<polyline points="1303.5,816.7 1320.71,816.7 1337.93,816.7 1355.14,816.7 1372.36,816.7 1389.58,816.7 1406.79,815.85 1424,813.87 1441.22,810.57 1458.43,805.17 1475.65,796.46 1492.87,782.49 1510.08,759.22 1527.3,724.66 1544.51,678.58 1561.72,583.19 1568.61,579.04 1647.8,579.51" fill="none" stroke="#f5f51a" stroke-width="3" stroke-linejoin="round"/>
<polyline points="1303.5,816.7 1320.71,816.7 1337.93,816.7 1355.14,816.7 1372.36,816.7 1389.58,816.7 1406.79,815.67 1424,813.6 1441.22,810.2 1458.43,804.74 1475.65,796.32 1492.87,781.34 1510.08,755.07 1527.3,721.2 1544.51,677.43 1561.72,610.38 1578.94,578.81 1596.15,578.35 1613.37,577.89 1630.59,577.43 1647.8,579.74" fill="none" stroke="#8a8a86" stroke-width="2.6" stroke-linejoin="round"/>
</g>
<rect x="1303.5" y="472.2" width="344.3" height="344.5" fill="none" stroke="#a6a6a6" stroke-width="1.7"/>
<line x1="1297.3" y1="816.7" x2="1302.3" y2="816.7" stroke="#ececec" stroke-width="1.7"/>
<text x="1296.9" y="823.55" text-anchor="end" font-size="14.3" fill="#dedede">0</text>
<line x1="1297.3" y1="772.12" x2="1302.3" y2="772.12" stroke="#ececec" stroke-width="1.7"/>
<text x="1296.9" y="777.47" text-anchor="end" font-size="14.3" fill="#dedede">200</text>
<line x1="1297.3" y1="726.04" x2="1302.3" y2="726.04" stroke="#ececec" stroke-width="1.7"/>
<text x="1296.9" y="731.39" text-anchor="end" font-size="14.3" fill="#dedede">400</text>
<line x1="1297.3" y1="679.96" x2="1302.3" y2="679.96" stroke="#ececec" stroke-width="1.7"/>
<text x="1296.9" y="685.31" text-anchor="end" font-size="14.3" fill="#dedede">600</text>
<line x1="1297.3" y1="633.88" x2="1302.3" y2="633.88" stroke="#ececec" stroke-width="1.7"/>
<text x="1296.9" y="639.23" text-anchor="end" font-size="14.3" fill="#dedede">800</text>
<line x1="1297.3" y1="587.8" x2="1302.3" y2="587.8" stroke="#ececec" stroke-width="1.7"/>
<text x="1296.9" y="593.15" text-anchor="end" font-size="14.3" fill="#dedede">1000</text>
<line x1="1297.3" y1="541.72" x2="1302.3" y2="541.72" stroke="#ececec" stroke-width="1.7"/>
<text x="1296.9" y="547.07" text-anchor="end" font-size="14.3" fill="#dedede">1200</text>
<line x1="1297.3" y1="495.64" x2="1302.3" y2="495.64" stroke="#ececec" stroke-width="1.7"/>
<text x="1296.9" y="500.99" text-anchor="end" font-size="14.3" fill="#dedede">1400</text>
<line x1="1303.5" y1="816.7" x2="1303.5" y2="822.7" stroke="#ececec" stroke-width="1.7"/>
<text x="1303.5" y="838.3" text-anchor="middle" font-size="14.3" fill="#dedede">0</text>
<line x1="1372.36" y1="816.7" x2="1372.36" y2="822.7" stroke="#ececec" stroke-width="1.7"/>
<text x="1372.36" y="838.3" text-anchor="middle" font-size="14.3" fill="#dedede">20</text>
<line x1="1441.22" y1="816.7" x2="1441.22" y2="822.7" stroke="#ececec" stroke-width="1.7"/>
<text x="1441.22" y="838.3" text-anchor="middle" font-size="14.3" fill="#dedede">40</text>
<line x1="1510.08" y1="816.7" x2="1510.08" y2="822.7" stroke="#ececec" stroke-width="1.7"/>
<text x="1510.08" y="838.3" text-anchor="middle" font-size="14.3" fill="#dedede">60</text>
<line x1="1578.94" y1="816.7" x2="1578.94" y2="822.7" stroke="#ececec" stroke-width="1.7"/>
<text x="1578.94" y="838.3" text-anchor="middle" font-size="14.3" fill="#dedede">80</text>
<line x1="1647.8" y1="816.7" x2="1647.8" y2="822.7" stroke="#ececec" stroke-width="1.7"/>
<text x="1647.8" y="838.3" text-anchor="middle" font-size="14.3" fill="#dedede">100</text>
<text x="1457" y="465.6" text-anchor="middle" font-size="13.6" fill="#dedede" textLength="71" lengthAdjust="spacingAndGlyphs">Luminance</text>
<rect x="990" y="642" width="249.5" height="180" fill="#232323"/>
<line x1="990" y1="804" x2="1239.5" y2="804" stroke="#8e8e8e" stroke-width="1.5"/>
<line x1="990" y1="768" x2="1239.5" y2="768" stroke="#8e8e8e" stroke-width="1.5"/>
<line x1="990" y1="732" x2="1239.5" y2="732" stroke="#8e8e8e" stroke-width="1.5"/>
<line x1="990" y1="696" x2="1239.5" y2="696" stroke="#8e8e8e" stroke-width="1.5"/>
<line x1="990" y1="660" x2="1239.5" y2="660" stroke="#8e8e8e" stroke-width="1.5"/>
<rect x="1015" y="727.68" width="65.3" height="94.32" fill="url(#gr)" stroke="#000" stroke-width="1.3"/>
<rect x="1080.3" y="732" width="66.3" height="90" fill="url(#gg)" stroke="#000" stroke-width="1.3"/>
<rect x="1146.6" y="775.2" width="65.9" height="46.8" fill="url(#gb)" stroke="#000" stroke-width="1.3"/>
<rect x="990" y="642" width="249.5" height="180" fill="none" stroke="#a6a6a6" stroke-width="1.7"/>
<line x1="983.8" y1="804" x2="988.8" y2="804" stroke="#ececec" stroke-width="2"/>
<text x="983.4" y="810.35" text-anchor="end" font-size="14.3" fill="#dedede">96</text>
<line x1="983.8" y1="768" x2="988.8" y2="768" stroke="#ececec" stroke-width="2"/>
<text x="983.4" y="774.35" text-anchor="end" font-size="14.3" fill="#dedede">98</text>
<line x1="983.8" y1="732" x2="988.8" y2="732" stroke="#ececec" stroke-width="2"/>
<text x="983.4" y="738.35" text-anchor="end" font-size="14.3" fill="#dedede">100</text>
<line x1="983.8" y1="696" x2="988.8" y2="696" stroke="#ececec" stroke-width="2"/>
<text x="983.4" y="702.35" text-anchor="end" font-size="14.3" fill="#dedede">102</text>
<line x1="983.8" y1="660" x2="988.8" y2="660" stroke="#ececec" stroke-width="2"/>
<text x="983.4" y="666.35" text-anchor="end" font-size="14.3" fill="#dedede">104</text>
<line x1="990" y1="822" x2="990" y2="828" stroke="#ececec" stroke-width="1.3"/>
<line x1="1239.5" y1="822" x2="1239.5" y2="828" stroke="#ececec" stroke-width="1.3"/>
<text x="1114" y="838.5" text-anchor="middle" font-size="14.3" fill="#dedede">100</text>
</svg>
<h1 class="abs">Grayscale Tracking</h1>
<div class="abs lbl">dE Formula:</div>
<div class="dd"><span>ITP</span><i></i></div>
<div class="abs rd" style="top:648.8px;font-size:19px;transform:scaleX(1.05)">Current Reading:</div>
<div class="abs rd" style="top:685px;font-size:24.5px;transform:scaleX(1.02)">x: 0,3183</div>
<div class="abs rd" style="top:726px;font-size:24.5px;transform:scaleX(1.03)">y: 0,3366</div>
<div class="abs rd" style="top:765.8px;font-size:24.5px;transform:scaleX(1.018)">fL: 301,153</div>
<div class="abs rd" style="top:806.2px;font-size:24.5px;transform:scaleX(1.066)">cd/m²: 1031,828</div>
<div class="tbl">
<div class="hdr"><span class="hc" style="left:136.9px">0</span><span class="hc" style="left:183.8px">5</span><span class="hc" style="left:230.9px">10</span><span class="hc" style="left:277.7px">15</span><span class="hc" style="left:324.5px">20</span><span class="hc" style="left:371.3px">25</span><span class="hc" style="left:422.6px">30</span><span class="hc" style="left:478.2px">35</span><span class="hc" style="left:534.5px">40</span><span class="hc" style="left:594.5px">45</span><span class="hc" style="left:658.7px">50</span></div>
<div class="row r0" style="top:27.6px"><span class="rl">Y</span><span class="c" style="left:137.6px">0,000</span><span class="c" style="left:184.7px">0,147</span><span class="c" style="left:231.7px">0,552</span><span class="c" style="left:278.9px">1,311</span><span class="c" style="left:325.4px">2,941</span><span class="c" style="left:372.5px">5,719</span><span class="c" style="left:419.6px">10,991</span><span class="c" style="left:475.3px">19,959</span><span class="c" style="left:530.9px">34,738</span><span class="c" style="left:586.6px">58,437</span><span class="c" style="left:650.8px">94,980</span></div>
<div class="row r1" style="top:53.47px"><span class="rl">x: CIE31</span><span class="c" style="left:137.6px">0,333</span><span class="c" style="left:184.7px">0,317</span><span class="c" style="left:231.7px">0,311</span><span class="c" style="left:278.9px">0,319</span><span class="c" style="left:325.4px">0,321</span><span class="c" style="left:372.5px">0,322</span><span class="c" style="left:419.6px">0,318</span><span class="c" style="left:475.3px">0,317</span><span class="c" style="left:530.9px">0,316</span><span class="c" style="left:586.6px">0,317</span><span class="c" style="left:650.8px">0,318</span></div>
<div class="row r0" style="top:79.34px"><span class="rl">y: CIE31</span><span class="c" style="left:137.6px">0,333</span><span class="c" style="left:184.7px">0,278</span><span class="c" style="left:231.7px">0,321</span><span class="c" style="left:278.9px">0,338</span><span class="c" style="left:325.4px">0,340</span><span class="c" style="left:372.5px">0,340</span><span class="c" style="left:419.6px">0,336</span><span class="c" style="left:475.3px">0,336</span><span class="c" style="left:530.9px">0,335</span><span class="c" style="left:586.6px">0,335</span><span class="c" style="left:650.8px">0,336</span></div>
<div class="row r1" style="top:105.21px"><span class="rl">Target Y</span><span class="c" style="left:137.6px">0,000</span><span class="c" style="left:184.7px">0,061</span><span class="c" style="left:231.7px">0,328</span><span class="c" style="left:278.9px">1,015</span><span class="c" style="left:325.4px">2,465</span><span class="c" style="left:372.5px">5,238</span><span class="c" style="left:419.6px">10,214</span><span class="c" style="left:475.3px">18,781</span><span class="c" style="left:530.9px">33,104</span><span class="c" style="left:586.6px">56,554</span><span class="c" style="left:650.8px">94,378</span></div>
<div class="row r0" style="top:131.08px"><span class="rl">Target x:CIE31</span><span class="c" style="left:137.6px">0,313</span><span class="c" style="left:184.7px">0,313</span><span class="c" style="left:231.7px">0,313</span><span class="c" style="left:278.9px">0,313</span><span class="c" style="left:325.4px">0,313</span><span class="c" style="left:372.5px">0,313</span><span class="c" style="left:419.6px">0,313</span><span class="c" style="left:475.3px">0,313</span><span class="c" style="left:530.9px">0,313</span><span class="c" style="left:586.6px">0,313</span><span class="c" style="left:650.8px">0,313</span></div>
<div class="row r1" style="top:156.95px"><span class="rl">Target y:CIE31</span><span class="c" style="left:137.6px">0,329</span><span class="c" style="left:184.7px">0,329</span><span class="c" style="left:231.7px">0,329</span><span class="c" style="left:278.9px">0,329</span><span class="c" style="left:325.4px">0,329</span><span class="c" style="left:372.5px">0,329</span><span class="c" style="left:419.6px">0,329</span><span class="c" style="left:475.3px">0,329</span><span class="c" style="left:530.9px">0,329</span><span class="c" style="left:586.6px">0,329</span><span class="c" style="left:650.8px">0,329</span></div>
<div class="sb"><div class="sbl"><svg width="14" height="15" viewBox="0 0 14 15"><path d="M9 3.5 L4.5 7.5 L9 11.5 Z" fill="#3a3a3a"/></svg></div><div class="thumb"></div><div class="sbr"><svg width="14" height="15" viewBox="0 0 14 15"><path d="M5 3.5 L9.5 7.5 L5 11.5 Z" fill="#3a3a3a"/></svg></div></div>
</div>
</div></body></html>
